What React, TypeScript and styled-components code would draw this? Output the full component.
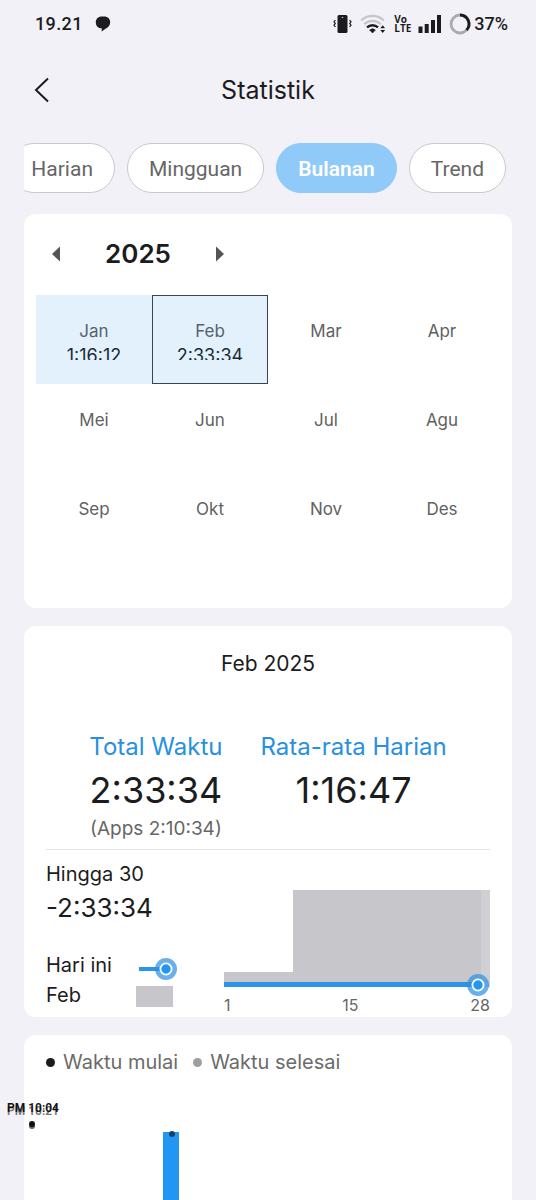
import React from "react";
import styled, { createGlobalStyle } from "styled-components";

const GlobalStyle = createGlobalStyle`
  * { box-sizing: border-box; }
  body { margin: 0; background: #f2f1f7; }
  button { font: inherit; color: inherit; background: none; border: 0; padding: 0; cursor: pointer; }
  h1, h2, p, dl, dd, dt { margin: 0; font-weight: 400; }
`;

const Page = styled.div`
  display: flex;
  flex-direction: column;
  height: 100vh;
  overflow: hidden;
  background: #f2f1f7;
  color: #1c1c1e;
  font-family: Inter, "Liberation Sans", sans-serif;
  font-optical-sizing: none;
`;

const StatusBar = styled.div`
  display: flex;
  align-items: center;
  flex: none;
  height: 48px;
  padding: 0 28px 0 35px;
  font: 500 18px/24px Roboto, sans-serif;
`;

const Clock = styled.span`
  margin-right: 12px;
  letter-spacing: 0.02em;
`;

const StatusIcons = styled.div`
  display: flex;
  align-items: center;
  margin-left: auto;
`;

const NetworkBadge = styled.span`
  display: flex;
  flex-direction: column;
  width: 26px;
  padding-left: 8px;
  font: 700 10px/9px "Open Sans", sans-serif;
`;

const Header = styled.header`
  display: grid;
  grid-template-columns: 64px 1fr 64px;
  align-items: center;
  flex: none;
  height: 84px;
`;

const BackButton = styled.button`
  display: flex;
  justify-content: flex-end;
  align-items: center;
  width: 50px;
  height: 48px;
`;

const Title = styled.h1`
  font-size: 25px;
  line-height: 32px;
  text-align: center;
`;

const Tabs = styled.nav`
  display: flex;
  justify-content: flex-end;
  gap: 12px;
  flex: none;
  margin: 11px 24px 21px;
  padding-right: 6px;
  overflow: hidden;
`;

const Tab = styled.button<{ $active?: boolean }>`
  flex: none;
  height: 50px;
  padding: 2px 21px 0;
  border: 1px solid ${(p) => (p.$active ? "#90caf9" : "#c8c8cd")};
  border-radius: 25px;
  background: ${(p) => (p.$active ? "#90caf9" : "#fff")};
  color: ${(p) => (p.$active ? "#fff" : "#666")};
  font: ${(p) => (p.$active ? 600 : 400)} 21px/28px Roboto, sans-serif;
`;

const Cards = styled.main`
  display: flex;
  flex-direction: column;
  flex: 1;
  gap: 18px;
  padding: 0 24px;
`;

const Card = styled.section`
  border-radius: 12px;
  background: #fff;
`;

const CalendarCard = styled(Card)`
  padding: 16px 12px 46px;
`;

const YearPicker = styled.div`
  display: flex;
  align-items: center;
  height: 48px;
  margin-bottom: 17px;
`;

const YearButton = styled.button`
  display: grid;
  place-items: center;
  width: 40px;
  height: 48px;
`;

const Year = styled.h2`
  width: 124px;
  font-size: 26px;
  font-weight: 600;
  line-height: 32px;
  text-align: center;
`;

const MonthGrid = styled.div`
  display: grid;
  grid-template-columns: repeat(4, 1fr);
  grid-auto-rows: 89px;
`;

const MonthCell = styled.button<{ $filled: boolean; $selected: boolean }>`
  display: flex;
  flex-direction: column;
  align-items: center;
  padding-top: 24px;
  background: ${(p) => (p.$filled ? "#e3f1fd" : "transparent")};
  box-shadow: ${(p) => (p.$selected ? "inset 0 0 0 1px #37474f" : "none")};
  color: ${(p) => (p.$filled ? "#56626c" : "#616161")};
  font-size: 17px;
  line-height: 24px;
`;

const MonthTime = styled.span`
  height: 17px;
  overflow: hidden;
  color: #1c2a36;
  font-size: 18px;
  line-height: 26px;
`;

const SummaryCard = styled(Card)`
  padding: 24px 22px 1px;
`;

const SummaryTitle = styled.h2`
  font-size: 21px;
  line-height: 28px;
  text-align: center;
`;

const Totals = styled.dl`
  display: flex;
  justify-content: center;
  gap: 38px;
  margin-top: 53px;
  padding-bottom: 8px;
  border-bottom: 1px solid #e4e4e6;
  text-align: center;
`;

const TotalLabel = styled.dt`
  color: #2790e0;
  font-size: 24px;
  line-height: 32px;
`;

const TotalValue = styled.dd`
  font-size: 36px;
  line-height: 54px;
`;

const TotalNote = styled.dd`
  color: #666;
  font-size: 19px;
  line-height: 24px;
`;

const Progress = styled.div`
  display: grid;
  grid-template-columns: 178px 1fr;
  padding-top: 9px;
`;

const ProgressText = styled.div`
  font-size: 20px;
  line-height: 30px;
`;

const Remaining = styled.p`
  margin-bottom: 24px;
  font-size: 26px;
  line-height: 37px;
`;

const LegendRow = styled.div`
  display: grid;
  grid-template-columns: 90px 44px;
  align-items: center;
  height: 30px;
  white-space: nowrap;
`;

const LegendKnob = styled.svg`
  margin-top: 8px;
`;

const Swatch = styled.span`
  width: 37px;
  height: 21px;
  margin-top: 2px;
  background: #c6c6cb;
`;

const Trend = styled.figure`
  margin: 0;
  padding-top: 31px;
`;

const Plot = styled.div`
  position: relative;
  height: 98px;
`;

const PlotArea = styled.svg`
  display: block;
  width: 100%;
  height: 98px;
`;

const Knob = styled.svg`
  position: absolute;
  right: 1px;
  bottom: -8px;
`;

const Axis = styled.figcaption`
  display: flex;
  justify-content: space-between;
  margin-top: 6px;
  color: #666;
  font-size: 16px;
  line-height: 22px;
`;

const TimesCard = styled(Card)`
  position: relative;
  display: flex;
  flex-direction: column;
  flex: 1;
  padding-top: 12px;
  border-radius: 12px 12px 0 0;
`;

const TimesLegend = styled.div`
  display: flex;
  gap: 15px;
  padding: 0 22px;
  color: #6b6b6b;
  font-size: 20px;
  line-height: 30px;
`;

const LegendItem = styled.span<{ $dot: string }>`
  display: flex;
  align-items: center;
  gap: 8px;
  &::before {
    content: "";
    width: 9px;
    height: 9px;
    border-radius: 50%;
    background: ${(p) => p.$dot};
  }
`;

const TimesPlot = styled.div`
  position: relative;
  flex: 1;
  margin-top: 55px;
`;

const Bar = styled.div`
  width: 16px;
  height: 100%;
  margin-left: 139px;
  background: #2196f3;
`;

const Point = styled.i<{ $x: number; $y: number; $tone: string }>`
  position: absolute;
  left: ${(p) => p.$x}px;
  top: ${(p) => p.$y}px;
  width: 6px;
  height: 6px;
  border-radius: 50%;
  background: ${(p) => p.$tone};
`;

const PointLabel = styled.span<{ $y: number; $tone: string }>`
  position: absolute;
  left: -17px;
  top: ${(p) => p.$y}px;
  color: ${(p) => p.$tone};
  font: 600 12px/14px Roboto, sans-serif;
  white-space: nowrap;
`;

const months: { name: string; time?: string }[] = [
  { name: "Jan", time: "1:16:12" },
  { name: "Feb", time: "2:33:34" },
  { name: "Mar" },
  { name: "Apr" },
  { name: "Mei" },
  { name: "Jun" },
  { name: "Jul" },
  { name: "Agu" },
  { name: "Sep" },
  { name: "Okt" },
  { name: "Nov" },
  { name: "Des" },
];

const KnobShape = ({ cx }: { cx: number }) => (
  <>
    <circle cx={cx} cy="11" r="11" fill="#2b90e4" fillOpacity="0.7" />
    <circle cx={cx} cy="11" r="5.6" fill="#2196f3" stroke="#fff" strokeWidth="1.8" />
  </>
);

export default function App() {
  return (
    <Page>
      <GlobalStyle />
      <StatusBar>
        <Clock>19.21</Clock>
        <svg width="16" height="16" viewBox="0 0 16 16" fill="#1c1c1e" aria-hidden="true">
          <path d="M6.8 0.500h2.400c3.600 0 6 2.400 6 5.700 0 3.200-2.200 5.200-4.700 6.500L6.700 15.600v-3.300C3 12.300 0.800 9.800 0.800 6.200 0.800 2.900 3.200 0.500 6.800 0.500z" />
        </svg>
        <StatusIcons>
          <svg width="53" height="20" viewBox="0 0 53 20" aria-hidden="true">
            <rect x="4.500" y="1" width="10" height="18" rx="1.500" fill="#1c1c1e" />
            <circle cx="9.500" cy="3.500" r="0.800" fill="#c8c8cc" />
            <path d="M2.400 6 1 7.800l1.300 1.600L1 11.200l1.400 1.800M16.600 6 18 7.800l-1.300 1.600 1.300 1.800-1.400 1.800" fill="none" stroke="#1c1c1e" strokeWidth="1.200" />
            <path d="M28.200 6.500a16 16 0 0 1 22.600 0" fill="none" stroke="#c5c5ca" strokeWidth="2.200" />
            <path d="M31.200 10.200a11.800 11.800 0 0 1 16.600 0" fill="none" stroke="#c5c5ca" strokeWidth="2.200" />
            <path d="M34 13.400a8 8 0 0 1 11 0" fill="none" stroke="#1c1c1e" strokeWidth="2.400" />
            <path d="M36.600 16a4.300 4.300 0 0 1 5.800 0L39.500 19z" fill="#1c1c1e" stroke="#1c1c1e" strokeWidth="0.600" />
            <path d="M47.300 14.200l2.400-2.900 2.400 2.900zM47.300 16l2.400 2.900 2.400-2.900z" fill="#1c1c1e" />
          </svg>
          <NetworkBadge>
            <span>Vo</span>
            <span>LTE</span>
          </NetworkBadge>
          <svg width="29" height="20" viewBox="79 0 29 20" fill="#1c1c1e" aria-hidden="true">
            <rect x="85.500" y="12.500" width="4" height="6.500" />
            <rect x="91.700" y="10" width="4" height="9" />
            <rect x="98" y="6" width="4" height="13" />
            <rect x="104" y="1" width="4" height="18" />
          </svg>
          <svg width="33" height="22" viewBox="0 0 33 22" aria-hidden="true">
            <circle cx="19" cy="11" r="9" fill="none" stroke="#a9a9ae" strokeWidth="2.800" />
            <path d="M19 2a9 9 0 0 1 6.600 15.100" fill="none" stroke="#1c1c1e" strokeWidth="2.800" />
          </svg>
          <span>37%</span>
        </StatusIcons>
      </StatusBar>

      <Header>
        <BackButton aria-label="Kembali">
          <svg width="16" height="26" viewBox="0 0 16 26" fill="none" stroke="#1c1c1e" strokeWidth="2">
            <path d="M14 1.500 2 13l12 11.500" />
          </svg>
        </BackButton>
        <Title>Statistik</Title>
      </Header>

      <Tabs>
        <Tab>Harian</Tab>
        <Tab>Mingguan</Tab>
        <Tab $active>Bulanan</Tab>
        <Tab>Trend</Tab>
      </Tabs>

      <Cards>
        <CalendarCard>
          <YearPicker>
            <YearButton aria-label="Tahun sebelumnya">
              <svg width="8" height="16" viewBox="0 0 8 16"><path d="M8 0.500v15L0 8z" fill="#555" /></svg>
            </YearButton>
            <Year>2025</Year>
            <YearButton aria-label="Tahun berikutnya">
              <svg width="8" height="16" viewBox="0 0 8 16"><path d="M0 0.500v15l8-7.500z" fill="#555" /></svg>
            </YearButton>
          </YearPicker>
          <MonthGrid>
            {months.map((m) => (
              <MonthCell key={m.name} $filled={!!m.time} $selected={m.name === "Feb"}>
                {m.name}
                {m.time && <MonthTime>{m.time}</MonthTime>}
              </MonthCell>
            ))}
          </MonthGrid>
        </CalendarCard>

        <SummaryCard>
          <SummaryTitle>Feb 2025</SummaryTitle>
          <Totals>
            <div>
              <TotalLabel>Total Waktu</TotalLabel>
              <TotalValue>2:33:34</TotalValue>
              <TotalNote>(Apps 2:10:34)</TotalNote>
            </div>
            <div>
              <TotalLabel>Rata-rata Harian</TotalLabel>
              <TotalValue>1:16:47</TotalValue>
            </div>
          </Totals>
          <Progress>
            <ProgressText>
              <p>Hingga 30</p>
              <Remaining>-2:33:34</Remaining>
              <LegendRow>
                Hari ini
                <LegendKnob width="44" height="22" viewBox="0 0 44 22" aria-hidden="true">
                  <rect x="3" y="9" width="24" height="4" fill="#2b93ea" />
                  <KnobShape cx={30} />
                </LegendKnob>
              </LegendRow>
              <LegendRow>
                Feb
                <Swatch />
              </LegendRow>
            </ProgressText>
            <Trend>
              <Plot>
                <PlotArea viewBox="0 0 266 98" preserveAspectRatio="none">
                  <path d="M0 82H69V0H257V94H0z" fill="#c6c6cb" />
                  <path d="M257 0h9v97h-9z" fill="#cfcfd4" />
                  <path d="M0 92h254v5H0z" fill="#2b93ea" />
                </PlotArea>
                <Knob width="22" height="22" viewBox="0 0 22 22">
                  <KnobShape cx={11} />
                </Knob>
              </Plot>
              <Axis>
                <span>1</span>
                <span>15</span>
                <span>28</span>
              </Axis>
            </Trend>
          </Progress>
        </SummaryCard>

        <TimesCard>
          <TimesLegend>
            <LegendItem $dot="#1c1c1e">Waktu mulai</LegendItem>
            <LegendItem $dot="#9e9e9e">Waktu selesai</LegendItem>
          </TimesLegend>
          <TimesPlot>
            <Bar />
            <Point $x={145} $y={-1} $tone="#173f66" />
            <Point $x={5} $y={-9} $tone="#666" />
            <Point $x={5} $y={-11} $tone="#111" />
            <PointLabel $y={-28} $tone="#777">PM 10:21</PointLabel>
            <PointLabel $y={-31} $tone="#111">PM 10:04</PointLabel>
          </TimesPlot>
        </TimesCard>
      </Cards>
    </Page>
  );
}
